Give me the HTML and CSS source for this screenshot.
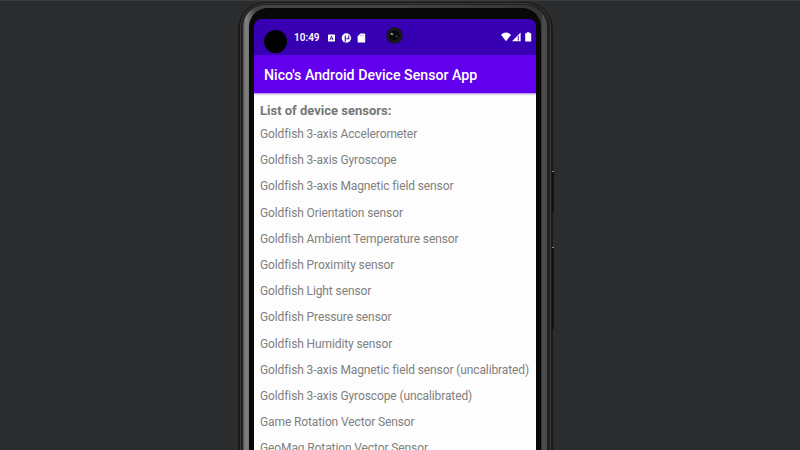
FILE: index.html
```html
<!DOCTYPE html>
<html lang="en">
<head>
<meta charset="utf-8">
<title>Device sensors</title>
<link rel="stylesheet" href="styles.css">
</head>
<body>
<div class="phone">
  <i class="button power"></i>
  <i class="button volume"></i>
  <div class="rim">
    <div class="metal">
      <div class="bezel">
        <main class="screen">
          <div class="status">
            <i class="hole"></i>
            <span class="time">10:49</span>
            <svg class="notices" width="40" height="10" viewBox="0 0 40 10">
              <rect x="1" y="1.5" width="7" height="7" rx=".6" fill="#fff"/>
              <path d="M3 7l1.5-4L6 7M3.5 5.7h2" fill="none" stroke="#3700b3" stroke-width=".8"/>
              <circle cx="19.4" cy="5" r="4.7" fill="#fff"/>
              <path d="M18.3 8.8V2.6M19.2 5.7h2.6V2.6" fill="none" stroke="#3700b3" stroke-width="1.1"/>
              <path d="M33.3.5h3.9q1 0 1 1v7.2q0 .9-1 .9h-5.6q-1 0-1-.9V3.4z" fill="#fff"/>
              <path d="M33.4 1.8v1.5M35 1.8v1.5M36.6 1.8v1.5" stroke="#3700b3" stroke-width=".6" opacity=".5"/>
            </svg>
            <svg class="camera" width="17" height="17" viewBox="0 0 17 17">
              <circle cx="8.5" cy="8.5" r="8.3" fill="#17151c"/>
              <circle cx="8.5" cy="8.5" r="5.7" fill="#08080c" stroke="#29272e" stroke-width=".8"/>
              <ellipse cx="6" cy="7" rx="1.7" ry="1.1" transform="rotate(30 6 7)" fill="#77758a"/>
              <circle cx="5.5" cy="6.8" r=".6" fill="#d0d0d8"/>
              <circle cx="10.7" cy="9.4" r=".9" fill="#54517a"/>
            </svg>
            <svg class="signals" width="31" height="10" viewBox="0 0 31 10">
              <path d="M0 2.7Q5-1.5 10.1 2.7L5.05 9.3z" fill="#fff"/>
              <path d="M11 9.3L19.6.6v8.7z" fill="#fff"/>
              <path d="M17.3 3.7v4.8" stroke="#3700b3" stroke-width=".9"/>
              <path d="M25.8.2h2.8v1h1.6v8.3h-6V1.2h1.6z" fill="#fff"/>
            </svg>
          </div>
          <header class="appbar">Nico's Android Device Sensor App</header>
          <section class="content">
            <h1>List of device sensors:</h1>
            <ul>
              <li>Goldfish 3-axis Accelerometer</li>
              <li>Goldfish 3-axis Gyroscope</li>
              <li>Goldfish 3-axis Magnetic field sensor</li>
              <li>Goldfish Orientation sensor</li>
              <li>Goldfish Ambient Temperature sensor</li>
              <li>Goldfish Proximity sensor</li>
              <li>Goldfish Light sensor</li>
              <li>Goldfish Pressure sensor</li>
              <li>Goldfish Humidity sensor</li>
              <li>Goldfish 3-axis Magnetic field sensor (uncalibrated)</li>
              <li>Goldfish 3-axis Gyroscope (uncalibrated)</li>
              <li>Game Rotation Vector Sensor</li>
              <li>GeoMag Rotation Vector Sensor</li>
            </ul>
          </section>
        </main>
      </div>
    </div>
  </div>
</div>
</body>
</html>
```
FILE: styles.css
```css
* { box-sizing: border-box; }
html, body { height: 100%; }
body {
  display: flex;
  margin: 0;
  overflow: hidden;
  background: #2b2c2e;
  border-top: 1px solid #3b3c3e;
  font-family: Roboto, "Liberation Sans", sans-serif;
}
.phone {
  position: relative;
  flex: none;
  width: 315px;
  margin: 1px 0 0 238px;
  padding: 1px 2px 0;
  border-radius: 27px 27px 0 0;
  background: #191919;
}
.rim {
  height: 100%;
  padding: 1px 3px 0 2px;
  border-radius: 25px 25px 0 0;
  border: 1px solid #3a3a3a;
  border-bottom: 0;
  background: #202020;
}
.metal {
  height: 100%;
  padding: 3px 6px 0 6px;
  border-radius: 22px 22px 0 0;
  background: linear-gradient(90deg, #555 0, #858585 3px, #777 5px, #444 12px, #444 50%, #353535 calc(100% - 6px), #4d4d4d calc(100% - 4px), #4a4a4a);
}
.bezel {
  height: 100%;
  padding: 11px 5px 0 5px;
  border-radius: 19px 19px 0 0;
  background: #080808;
}
.screen {
  height: 100%;
  overflow: hidden;
  border-radius: 8px 8px 0 0;
  background: linear-gradient(#3700b3 20px, #fdfdfd 20px);
}
.status {
  display: flex;
  align-items: flex-start;
  height: 36px;
  background: #3700b3;
  color: #fff;
}
.hole {
  width: 23px;
  height: 23px;
  margin: 11px 0 0 10px;
  border-radius: 50%;
  background: #000;
}
.time {
  width: 33px;
  margin: 12px 0 0 7px;
  font-size: 10px;
  line-height: 13px;
  font-weight: 600;
  white-space: nowrap;
}
.notices { margin-top: 14px; }
.camera { margin: 8px 0 0 19px; }
.signals { margin: 13px 4px 0 auto; }
.appbar {
  position: relative;
  height: 38px;
  padding-left: 10px;
  background: #6200ee;
  box-shadow: 0 1px 1px #b99aee, 0 1px 3px #0003;
  color: #fff;
  font-size: 14.2px;
  font-weight: 500;
  line-height: 41px;
  white-space: nowrap;
}
.content { padding: 8px 0 0 6px; color: #757575; }
h1 {
  margin: 0;
  font-size: 13px;
  font-weight: 700;
  line-height: 19px;
  white-space: nowrap;
}
ul { margin: 0; padding: 0; list-style: none; }
li {
  height: 26.2px;
  color: #808080;
  font-size: 12px;
  letter-spacing: -.11px;
  font-variant-ligatures: common-ligatures;
  line-height: 28px;
  white-space: nowrap;
}
.button {
  position: absolute;
  left: 314px;
  width: 2px;
  background: #111;
  border-top: 1px solid #888;
}
.power { top: 169px; height: 41px; }
.volume { top: 245px; height: 82px; }
```
